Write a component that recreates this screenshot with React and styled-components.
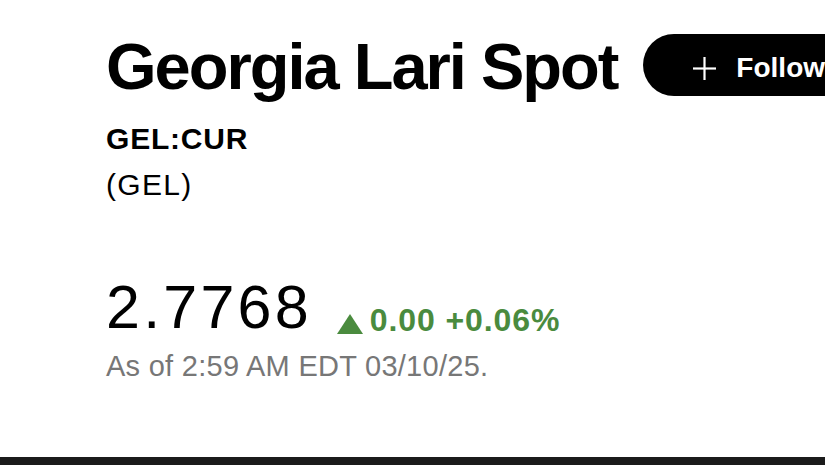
import React from "react";
import styled, { createGlobalStyle } from "styled-components";

const GlobalStyle = createGlobalStyle`
  html, body {
    margin: 0;
    padding: 0;
    background: #ffffff;
    overflow: hidden;
  }
  body {
    font-family: "Liberation Sans", Arial, Helvetica, sans-serif;
    color: #000;
  }
`;

const Page = styled.div`
  width: 825px;
  height: 465px;
  display: flex;
  flex-direction: column;
  overflow: hidden;
`;

const Content = styled.main`
  flex: 1;
  padding: 34px 0 0 106px;
  display: flex;
  flex-direction: column;
`;

const Header = styled.div`
  display: flex;
  align-items: flex-start;
  gap: 26px;
`;

const Title = styled.h1`
  margin: 0;
  font-size: 65px;
  line-height: 65px;
  font-weight: 700;
  letter-spacing: -2px;
  white-space: nowrap;
`;

const FollowButton = styled.button`
  flex-shrink: 0;
  display: flex;
  align-items: center;
  gap: 20px;
  height: 62px;
  padding: 6px 40px 0 50px;
  box-sizing: border-box;
  border: none;
  border-radius: 31px;
  background: #000;
  color: #fff;
  font-family: inherit;
  font-size: 28px;
  font-weight: 700;
  line-height: 28px;
  cursor: pointer;
`;

const Ticker = styled.div`
  margin-top: 25px;
  font-size: 30px;
  line-height: 30px;
  font-weight: 700;
  letter-spacing: 0.8px;
`;

const Currency = styled.div`
  margin-top: 16px;
  font-size: 30px;
  line-height: 30px;
  font-weight: 400;
  letter-spacing: 1.3px;
`;

const PriceRow = styled.div`
  margin-top: 77px;
  display: flex;
  align-items: flex-end;
  gap: 25px;
`;

const Price = styled.div`
  font-size: 61px;
  line-height: 61px;
  font-weight: 400;
  letter-spacing: 3.2px;
`;

const Change = styled.div`
  display: flex;
  align-items: flex-end;
  gap: 7px;
  margin-bottom: 2px;
  color: ${(p) => p.$color};
  font-size: 32px;
  line-height: 32px;
  font-weight: 700;
  letter-spacing: 0.9px;
`;

const Arrow = styled.svg`
  display: block;
  width: 26px;
  height: 20px;
  margin-bottom: 2px;
`;

const Timestamp = styled.div`
  margin-top: 14px;
  font-size: 29px;
  line-height: 29px;
  letter-spacing: 0.27px;
  color: #777777;
`;

const Footer = styled.footer`
  height: 8px;
  background: #1b1b1b;
  flex-shrink: 0;
`;

const PlusIcon = () => (
  <svg width="23" height="23" viewBox="0 0 23 23" aria-hidden="true">
    <line x1="11.5" y1="0" x2="11.5" y2="23" stroke="#fff" strokeWidth="2.2" />
    <line x1="0" y1="11.5" x2="23" y2="11.5" stroke="#fff" strokeWidth="2.2" />
  </svg>
);

export default function App() {
  const green = "#4a8b3e";
  return (
    <>
      <GlobalStyle />
      <Page>
        <Content>
          <Header>
            <Title>Georgia Lari Spot</Title>
            <FollowButton>
              <PlusIcon />
              Follow
            </FollowButton>
          </Header>
          <Ticker>GEL:CUR</Ticker>
          <Currency>(GEL)</Currency>
          <PriceRow>
            <Price>2.7768</Price>
            <Change $color={green}>
              <Arrow viewBox="0 0 26 20" aria-hidden="true">
                <polygon points="13,0 26,20 0,20" fill={green} />
              </Arrow>
              <span>0.00 +0.06%</span>
            </Change>
          </PriceRow>
          <Timestamp>As of 2:59 AM EDT 03/10/25.</Timestamp>
        </Content>
        <Footer />
      </Page>
    </>
  );
}
